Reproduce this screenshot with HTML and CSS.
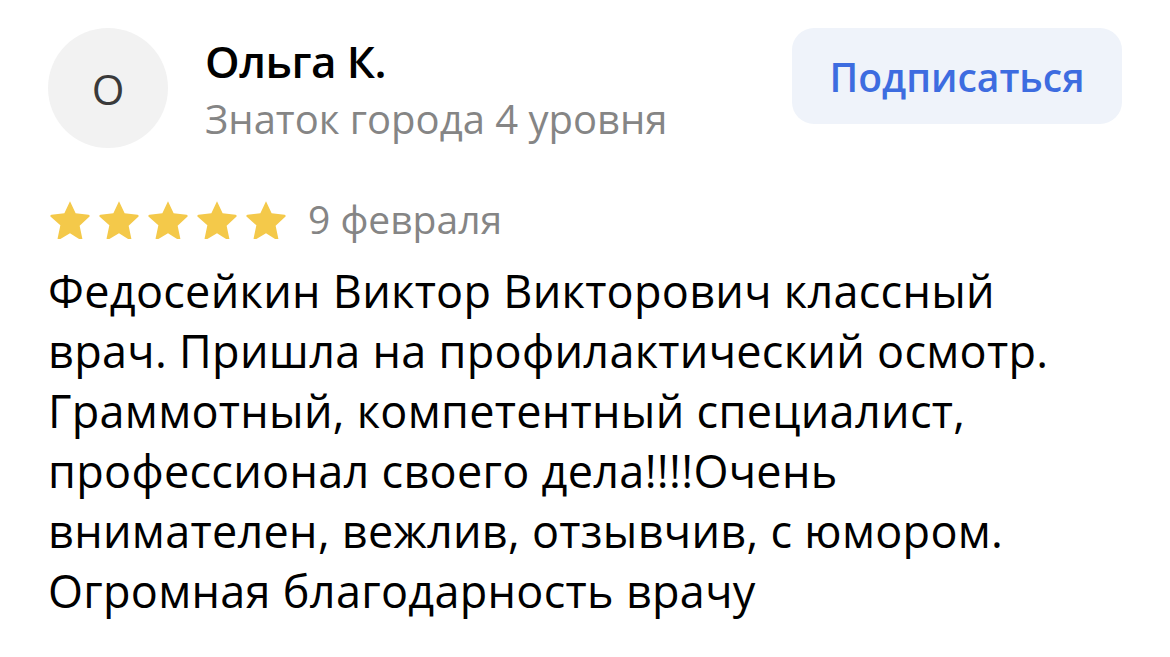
FILE: index.html
```html
<!DOCTYPE html>
<html lang="ru">
<head>
    <meta charset="UTF-8">
    <meta name="viewport" content="width=device-width, initial-scale=1.0">
    <title>Отзыв</title>
    <link rel="stylesheet" href="styles.css">
</head>
<body>
    <div class="review">
        <div class="head">
            <div class="avatar">О</div>
            <div class="author">
                <div class="name">Ольга К.</div>
                <div class="level">Знаток города 4 уровня</div>
            </div>
            <button class="subscribe" type="button">Подписаться</button>
        </div>

        <div class="rating">
            <div class="stars">
                <svg class="star" viewBox="0 0 24 22"><path d="M12 1.2l3.1 6.6 7.1.8c.6.1.8.8.4 1.2l-5.3 4.9 1.5 7.1c.1.6-.5 1-1 .7L12 18.9l-5.8 3.4c-.5.3-1.1-.1-1-.7l1.5-7.1L1.4 9.8C1 9.4 1.2 8.7 1.8 8.6l7.1-.8L12 1.2z"/></svg>
                <svg class="star" viewBox="0 0 24 22"><path d="M12 1.2l3.1 6.6 7.1.8c.6.1.8.8.4 1.2l-5.3 4.9 1.5 7.1c.1.6-.5 1-1 .7L12 18.9l-5.8 3.4c-.5.3-1.1-.1-1-.7l1.5-7.1L1.4 9.8C1 9.4 1.2 8.7 1.8 8.6l7.1-.8L12 1.2z"/></svg>
                <svg class="star" viewBox="0 0 24 22"><path d="M12 1.2l3.1 6.6 7.1.8c.6.1.8.8.4 1.2l-5.3 4.9 1.5 7.1c.1.6-.5 1-1 .7L12 18.9l-5.8 3.4c-.5.3-1.1-.1-1-.7l1.5-7.1L1.4 9.8C1 9.4 1.2 8.7 1.8 8.6l7.1-.8L12 1.2z"/></svg>
                <svg class="star" viewBox="0 0 24 22"><path d="M12 1.2l3.1 6.6 7.1.8c.6.1.8.8.4 1.2l-5.3 4.9 1.5 7.1c.1.6-.5 1-1 .7L12 18.9l-5.8 3.4c-.5.3-1.1-.1-1-.7l1.5-7.1L1.4 9.8C1 9.4 1.2 8.7 1.8 8.6l7.1-.8L12 1.2z"/></svg>
                <svg class="star" viewBox="0 0 24 22"><path d="M12 1.2l3.1 6.6 7.1.8c.6.1.8.8.4 1.2l-5.3 4.9 1.5 7.1c.1.6-.5 1-1 .7L12 18.9l-5.8 3.4c-.5.3-1.1-.1-1-.7l1.5-7.1L1.4 9.8C1 9.4 1.2 8.7 1.8 8.6l7.1-.8L12 1.2z"/></svg>
            </div>
            <span class="date">9 февраля</span>
        </div>

        <p class="text">Федосейкин Виктор Викторович классный врач. Пришла на профилактический осмотр. Граммотный, компетентный специалист, профессионал своего дела!!!!Очень внимателен, вежлив, отзывчив, с юмором. Огромная благодарность врачу</p>
    </div>
</body>
</html>
```

FILE: styles.css
```css
body {
    margin: 0;
    background-color: #fff;
    font-family: "Open Sans", "Noto Sans", Arial, sans-serif;
    color: #000;
}
.review {
    padding: 28px 48px 0 48px;
}
.head {
    display: flex;
    align-items: flex-start;
}
.avatar {
    width: 120px;
    height: 120px;
    border-radius: 50%;
    background-color: #f2f2f2;
    color: #3a3a3a;
    font-size: 42px;
    display: flex;
    align-items: center;
    justify-content: center;
    flex-shrink: 0;
}
.author {
    margin-left: 37px;
    padding-top: 4px;
}
.name {
    font-size: 44px;
    font-weight: 600;
    line-height: 58px;
    letter-spacing: -0.5px;
}
.level {
    font-size: 40px;
    line-height: 58px;
    color: #858585;
}
.subscribe {
    margin-left: auto;
    width: 330px;
    height: 96px;
    border: none;
    border-radius: 22px;
    background-color: #eff3fa;
    color: #3d6ce0;
    font-family: inherit;
    font-size: 39px;
    font-weight: 600;
    cursor: pointer;
}
.rating {
    display: flex;
    align-items: center;
    margin-top: 44px;
}
.stars {
    display: flex;
    gap: 5px;
}
.star {
    width: 44px;
    height: 40px;
    fill: #f4c94a;
}
.date {
    margin-left: 20px;
    font-size: 39px;
    color: #858585;
}
.text {
    max-width: 1060px;
    margin: 16px 0 0 0;
    font-size: 45px;
    line-height: 60px;
    letter-spacing: 0.3px;
}
```
